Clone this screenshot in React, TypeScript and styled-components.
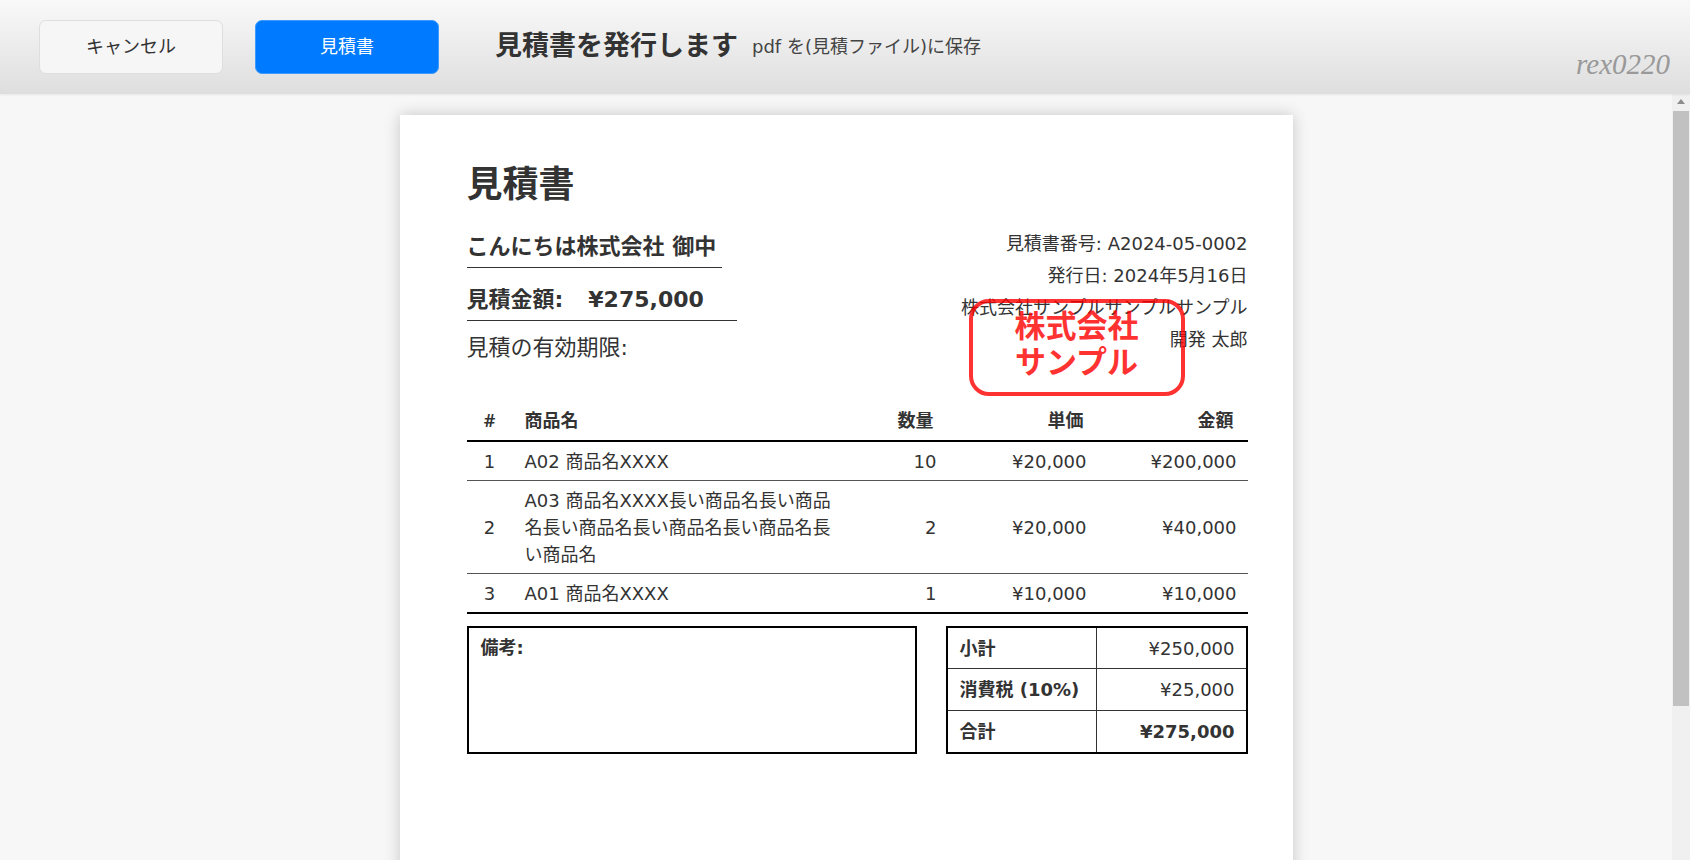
import React from "react";
import styled, { createGlobalStyle } from "styled-components";

const GlobalStyle = createGlobalStyle`
  * { box-sizing: border-box; }
  body {
    margin: 0;
    background: #f7f7f7;
    color: #333;
    font-family: "DejaVu Sans", "Noto Sans CJK JP", sans-serif;
    font-size: 18px;
    line-height: 27px;
  }
  h1, h2, p { margin: 0; }
`;

const Page = styled.div`
  display: flex;
  flex-direction: column;
  height: 100vh;
  overflow: hidden;
`;

const Toolbar = styled.header`
  position: relative;
  z-index: 1;
  flex: none;
  display: flex;
  align-items: flex-start;
  min-height: 94px;
  padding: 20px 20px 14px 39px;
  background: linear-gradient(#f9f9f9, #dedede);
  box-shadow: 0 0 3px rgba(0, 0, 0, 0.12);
`;

const Actions = styled.div`
  display: flex;
  gap: 32px;
`;

const Button = styled.button<{ $primary?: boolean }>`
  width: 184px;
  height: 54px;
  padding: 0 0 2px;
  border: 1px solid ${(p) => (p.$primary ? "#3d9aff" : "#dcdfe0")};
  border-radius: 7px;
  background: ${(p) => (p.$primary ? "#007bff" : "#f6f6f6")};
  color: ${(p) => (p.$primary ? "#fff" : "#333")};
  font: inherit;
  cursor: pointer;
`;

const Heading = styled.div`
  display: flex;
  align-items: center;
  gap: 14px;
  height: 52px;
  margin-left: 56px;
`;

const DialogTitle = styled.h1`
  font-size: 27px;
  line-height: 52px;
  white-space: nowrap;
`;

const Hint = styled.p`
  color: #444;
  white-space: nowrap;
`;

const Brand = styled.span`
  align-self: flex-end;
  margin-left: auto;
  color: #999;
  font-family: "Liberation Serif", serif;
  font-size: 29px;
  font-style: italic;
  line-height: 32px;
`;

const Viewport = styled.div`
  display: flex;
  flex: 1;
  min-height: 0;
`;

const Preview = styled.main`
  flex: 1;
  min-width: 0;
  padding: 21px 0 20px 20px;
  overflow-y: auto;
  scrollbar-width: none;
`;

const ScrollTrack = styled.div`
  display: flex;
  flex-direction: column;
  align-items: center;
  width: 18px;
  padding: 0 1px;
  background: #f0f0f0;
`;

const ScrollArrow = styled.svg`
  flex: none;
  width: 16px;
  height: 17px;
`;

const ScrollThumb = styled.div`
  flex: 27;
  width: 100%;
  background: #c1c1c1;
`;

const ScrollRest = styled.div`
  flex: 7;
`;

const Sheet = styled.article`
  width: 100%;
  max-width: 893px;
  min-height: 1263px;
  margin: 0 auto;
  padding: 46px 45px 45px 67px;
  background: #fff;
  box-shadow: 0 0 15px rgba(0, 0, 0, 0.2);
`;

const SheetTitle = styled.h2`
  margin-bottom: 19px;
  font-size: 36px;
  line-height: 48px;
`;

const Summary = styled.section`
  display: flex;
  justify-content: space-between;
  margin-bottom: 35px;
`;

const Customer = styled.div`
  display: flex;
  flex-direction: column;
  align-items: flex-start;
  padding-top: 2px;
  font-size: 22px;
  line-height: 34px;
`;

const Underlined = styled.p<{ $width: number }>`
  min-width: ${(p) => p.$width}px;
  padding-bottom: 3px;
  border-bottom: 1px solid #333;
  font-weight: bold;
`;

const Amount = styled(Underlined)`
  display: flex;
  gap: 25px;
  margin: 15px 0 10px;
`;

const Issuer = styled.div`
  position: relative;
  line-height: 32px;
  text-align: right;
`;

const Stamp = styled.div`
  position: absolute;
  top: 71px;
  right: 63px;
  width: 216px;
  height: 97px;
  padding-top: 5px;
  border: 4px solid #f00;
  border-radius: 20px;
  color: #f00;
  font-size: 31px;
  font-weight: bold;
  line-height: 36px;
  text-align: center;
  opacity: 0.8;
`;

const ItemTable = styled.table`
  width: 100%;
  border-collapse: separate;
  border-spacing: 0;
  border-bottom: 1px solid #000;
  table-layout: fixed;
`;

type Align = "left" | "center" | "right";

const Col = styled.col<{ $width?: number }>`
  width: ${(p) => (p.$width ? `${p.$width}px` : "auto")};
`;

const HeadCell = styled.th<{ $align: Align }>`
  padding: 7px ${(p) => (p.$align === "right" ? 14 : 12)}px 6px 12px;
  border-bottom: 2px solid #000;
  text-align: ${(p) => p.$align};
`;

const NumberMark = styled.span`
  font-family: "Noto Sans", sans-serif;
  font-weight: 600;
`;

const Cell = styled.td<{ $align: Align }>`
  padding: 6px ${(p) => (p.$align === "right" ? 11 : 12)}px 5px 12px;
  border-bottom: 1px solid #555;
  text-align: ${(p) => p.$align};
  tr:last-child > & {
    border-color: #000;
  }
`;

const Footer = styled.section`
  display: flex;
  justify-content: space-between;
  gap: 29px;
  margin-top: 12px;
`;

const Notes = styled.div`
  flex: 1;
  min-height: 128px;
  padding: 6px 12px;
  border: 2px solid #000;
  font-weight: bold;
`;

const TotalTable = styled.table`
  width: 302px;
  border: 2px solid #000;
  border-spacing: 0;
  table-layout: fixed;
`;

const TotalLabel = styled.th`
  padding: 0 12px;
  border-right: 1px solid #333;
  text-align: left;
  white-space: nowrap;
  tr + tr > & {
    border-top: 1px solid #333;
  }
`;

const TotalValue = styled.td<{ $bold?: boolean }>`
  padding: 0 11px;
  font-weight: ${(p) => (p.$bold ? "bold" : "normal")};
  text-align: right;
  tr + tr > & {
    border-top: 1px solid #333;
  }
`;

const items = [
  { name: "A02 商品名XXXX", quantity: "10", price: "¥20,000", amount: "¥200,000" },
  {
    name: "A03 商品名XXXX長い商品名長い商品名長い商品名長い商品名長い商品名長い商品名",
    quantity: "2",
    price: "¥20,000",
    amount: "¥40,000",
  },
  { name: "A01 商品名XXXX", quantity: "1", price: "¥10,000", amount: "¥10,000" },
];

const totals = [
  { label: "小計", value: "¥250,000" },
  { label: "消費税 (10%)", value: "¥25,000" },
  { label: "合計", value: "¥275,000", bold: true },
];

export default function App() {
  return (
    <Page lang="ja">
      <GlobalStyle />
      <Toolbar>
        <Actions>
          <Button type="button">キャンセル</Button>
          <Button type="button" $primary>
            見積書
          </Button>
        </Actions>
        <Heading>
          <DialogTitle>見積書を発行します</DialogTitle>
          <Hint>pdf を(見積ファイル)に保存</Hint>
        </Heading>
        <Brand>rex0220</Brand>
      </Toolbar>
      <Viewport>
        <Preview>
          <Sheet>
            <SheetTitle>見積書</SheetTitle>
            <Summary>
              <Customer>
                <Underlined $width={255}>こんにちは株式会社 御中</Underlined>
                <Amount $width={270}>
                  <span>見積金額:</span>
                  <span>¥275,000</span>
                </Amount>
                <p>見積の有効期限:</p>
              </Customer>
              <Issuer>
                <p>見積書番号: A2024-05-0002</p>
                <p>発行日: 2024年5月16日</p>
                <p>株式会社サンプルサンプルサンプル</p>
                <p>開発 太郎</p>
                <Stamp>
                  株式会社
                  <br />
                  サンプル
                </Stamp>
              </Issuer>
            </Summary>
            <ItemTable>
              <colgroup>
                <Col $width={46} />
                <Col />
                <Col $width={102} />
                <Col $width={150} />
                <Col $width={150} />
              </colgroup>
              <thead>
                <tr>
                  <HeadCell $align="center">
                    <NumberMark>#</NumberMark>
                  </HeadCell>
                  <HeadCell $align="left">商品名</HeadCell>
                  <HeadCell $align="right">数量</HeadCell>
                  <HeadCell $align="right">単価</HeadCell>
                  <HeadCell $align="right">金額</HeadCell>
                </tr>
              </thead>
              <tbody>
                {items.map((item, i) => (
                  <tr key={i}>
                    <Cell $align="center">{i + 1}</Cell>
                    <Cell $align="left">{item.name}</Cell>
                    <Cell $align="right">{item.quantity}</Cell>
                    <Cell $align="right">{item.price}</Cell>
                    <Cell $align="right">{item.amount}</Cell>
                  </tr>
                ))}
              </tbody>
            </ItemTable>
            <Footer>
              <Notes>備考:</Notes>
              <TotalTable>
                <tbody>
                  {totals.map((t) => (
                    <tr key={t.label}>
                      <TotalLabel scope="row">{t.label}</TotalLabel>
                      <TotalValue $bold={t.bold}>{t.value}</TotalValue>
                    </tr>
                  ))}
                </tbody>
              </TotalTable>
            </Footer>
          </Sheet>
        </Preview>
        <ScrollTrack aria-hidden="true">
          <ScrollArrow viewBox="0 0 16 17">
            <path d="M4 10 L8 5 L12 10 Z" fill="#8b8b8b" />
          </ScrollArrow>
          <ScrollThumb />
          <ScrollRest />
        </ScrollTrack>
      </Viewport>
    </Page>
  );
}
